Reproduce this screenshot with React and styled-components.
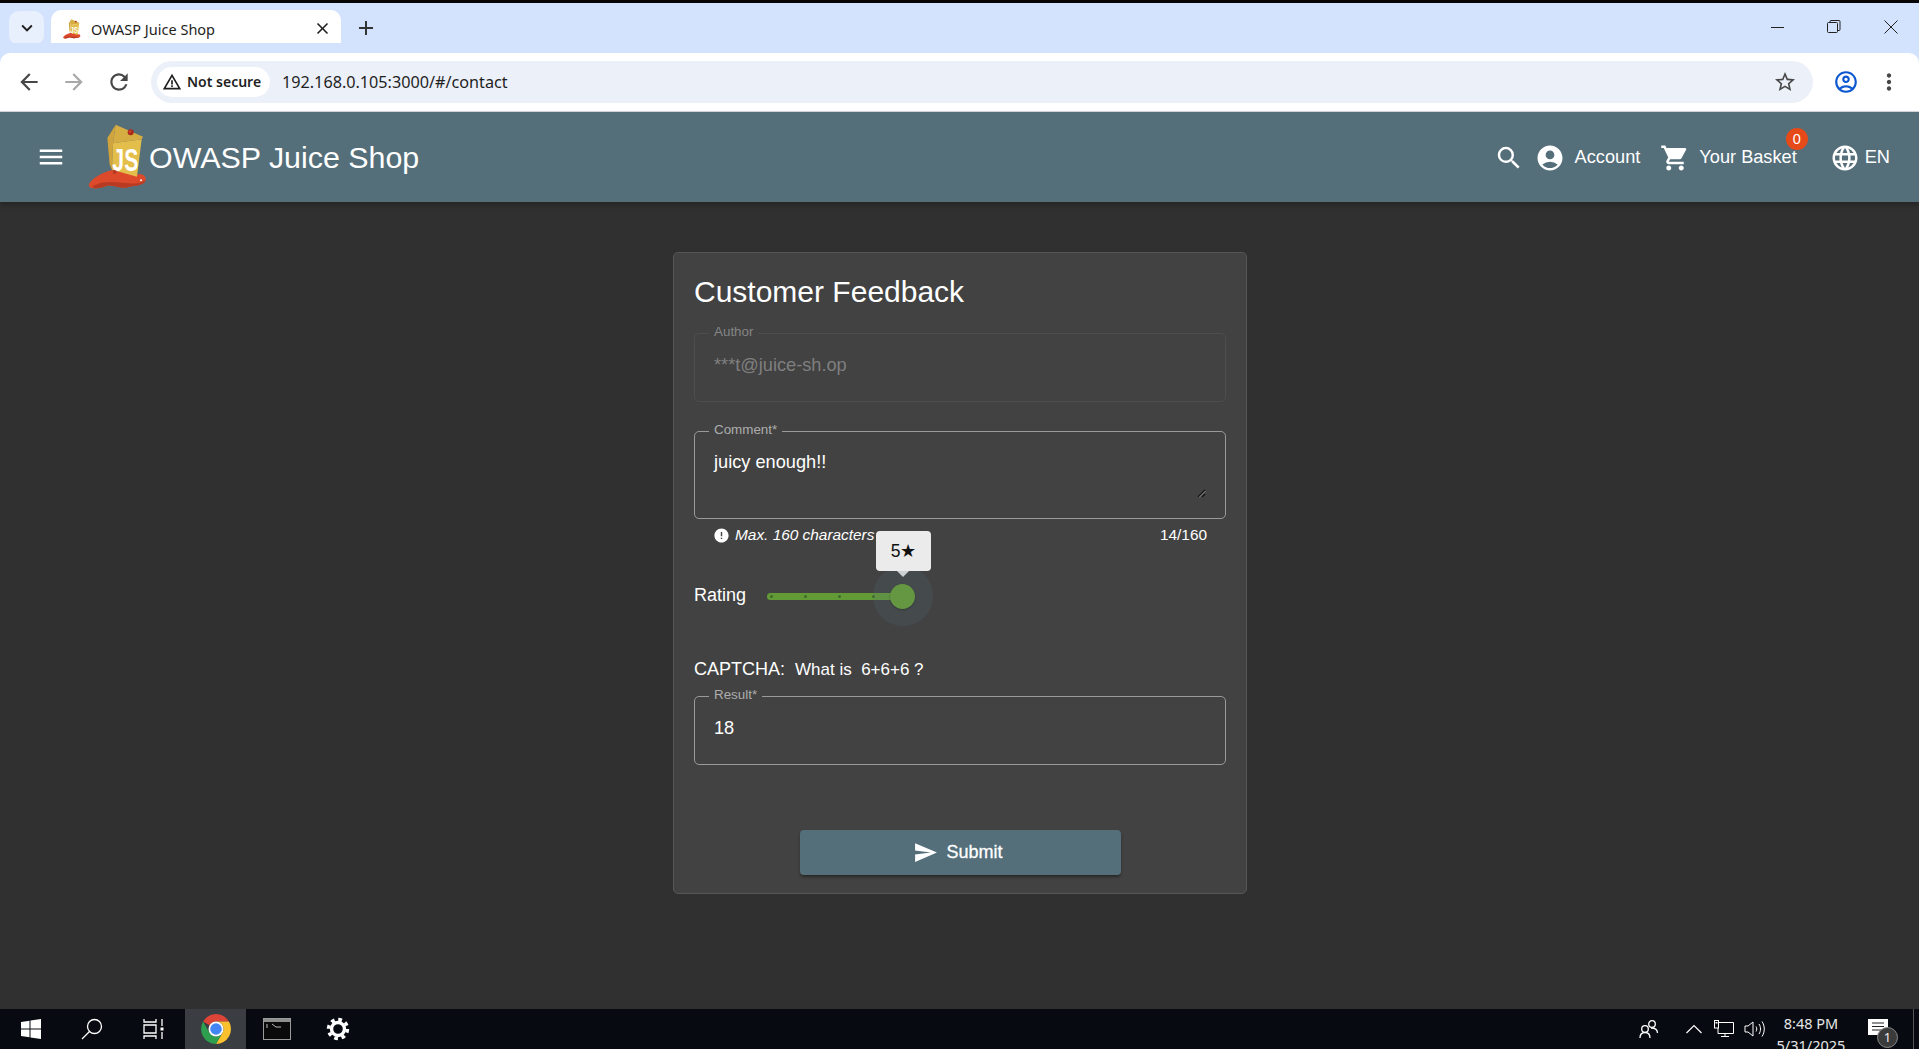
import styled, { createGlobalStyle } from "styled-components";
import {
  MdAccountCircle,
  MdAdd,
  MdArrowBack,
  MdArrowForward,
  MdClose,
  MdError,
  MdKeyboardArrowDown,
  MdLanguage,
  MdMenu,
  MdMoreVert,
  MdOutlineAccountCircle,
  MdRefresh,
  MdSearch,
  MdSend,
  MdShoppingCart,
  MdStarBorder,
  MdWarningAmber,
} from "react-icons/md";

const Global = createGlobalStyle`
  html, body {
    margin: 0;
    padding: 0;
    height: 100%;
    overflow: hidden;
    background: #303030;
  }
  * { box-sizing: border-box; }
`;

const Page = styled.div`
  height: 1049px;
  display: flex;
  flex-direction: column;
  overflow: hidden;
  font-family: "Liberation Sans", Arial, sans-serif;
  color: #fff;
`;

const TopStrip = styled.div`
  height: 3px;
  flex: none;
  background: #050505;
`;

const TabStrip = styled.div`
  height: 50px;
  flex: none;
  display: flex;
  align-items: flex-end;
  background: #d3e3fd;
  color: #1f1f1f;
  font-family: "Noto Sans", sans-serif;
`;

const TabSearch = styled.div`
  width: 35px;
  height: 34px;
  margin: 0 7px 8px 9px;
  border-radius: 10px;
  background: #e9f0fd;
  display: flex;
  align-items: center;
  justify-content: center;
  font-size: 22px;
`;

const Tab = styled.div`
  width: 290px;
  height: 43px;
  background: #fff;
  border-radius: 10px 10px 0 0;
  display: flex;
  align-items: center;
  padding: 0 9px 6px 12px;
  font-size: 14.5px;
`;

const TabTitle = styled.span`
  margin-left: 10px;
  flex: 1;
  white-space: nowrap;
`;

const NewTab = styled.div`
  margin: 0 0 10px 13px;
  height: 30px;
  display: flex;
  align-items: center;
  font-size: 24px;
  color: #333;
`;

const WindowControls = styled.div`
  margin-left: auto;
  align-self: stretch;
  display: flex;
`;

const WindowButton = styled.div`
  width: 57px;
  height: 48px;
  display: flex;
  align-items: center;
  justify-content: center;
`;

const Toolbar = styled.div`
  height: 59px;
  flex: none;
  display: flex;
  align-items: center;
  background: #fff;
  border-bottom: 1px solid #d5d8dc;
  border-radius: 10px 10px 0 0;
  box-shadow: 0 -10px 0 #d3e3fd;
  padding: 0 0 1px 14px;
  color: #474747;
  font-family: "Noto Sans", sans-serif;
  position: relative;
`;

const NavIcon = styled.div`
  width: 30px;
  margin-right: 15px;
  display: flex;
  justify-content: center;
  font-size: 26px;
  color: ${(p) => (p.$dim ? "#a8a8a8" : "#474747")};
`;

const Omnibox = styled.div`
  width: 1662px;
  height: 42px;
  margin-left: 2px;
  border-radius: 21px;
  background: #ebf0f9;
  display: flex;
  align-items: center;
  padding: 0 16px 0 6px;
`;

const SecurityChip = styled.div`
  width: 113px;
  height: 30px;
  border-radius: 15px;
  background: #fff;
  display: flex;
  align-items: center;
  padding-left: 5px;
  gap: 5px;
  font-size: 14px;
  font-weight: 600;
  color: #1f1f1f;
  white-space: nowrap;
`;

const Url = styled.span`
  margin-left: 12px;
  font-size: 16.2px;
  color: #1f1f1f;
  flex: 1;
  white-space: nowrap;
`;

const Profile = styled.div`
  margin-left: 18px;
  width: 30px;
  display: flex;
  justify-content: center;
  font-size: 26px;
  color: #0b57d0;
`;

const Kebab = styled.div`
  margin-left: 15px;
  display: flex;
  font-size: 26px;
  color: #474747;
`;

const Header = styled.header`
  height: 90px;
  flex: none;
  background: #546e7a;
  display: flex;
  align-items: center;
  padding: 0 29px 0 36px;
  box-shadow: 0 3px 5px rgba(0, 0, 0, 0.25);
  position: relative;
`;

const Brand = styled.div`
  margin-left: 22px;
  display: flex;
  align-items: center;
`;

const BrandName = styled.span`
  margin-left: 1px;
  font-size: 30.4px;
  white-space: nowrap;
`;

const HeaderNav = styled.nav`
  margin-left: auto;
  display: flex;
  align-items: center;
  font-size: 18.2px;
  padding-top: 1px;
`;

const NavItem = styled.span`
  position: relative;
  display: flex;
  align-items: center;
  margin-left: ${(p) => p.$gap || 0}px;
  white-space: nowrap;
`;

const Badge = styled.span`
  position: absolute;
  top: -19px;
  right: -11px;
  width: 22px;
  height: 22px;
  border-radius: 50%;
  background: #e64a19;
  font-size: 14.5px;
  line-height: 22px;
  text-align: center;
`;

const Main = styled.main`
  flex: 1;
  min-height: 0;
  background: #303030;
  display: flex;
  justify-content: center;
  align-items: flex-start;
  padding: 50px 0 0 1px;
`;

const Card = styled.section`
  width: 574px;
  height: 642px;
  background: #424242;
  border: 1px solid #565656;
  border-radius: 5px;
  padding: 0 20px;
`;

const Title = styled.h1`
  margin: 21px 0 23px;
  font-size: 30px;
  font-weight: 400;
  line-height: 36px;
  white-space: nowrap;
`;

const Field = styled.div`
  position: relative;
  height: ${(p) => p.$height}px;
  margin-top: ${(p) => p.$top || 0}px;
  border: 1px solid ${(p) => (p.$disabled ? "#4e4e4e" : "#9a9a9a")};
  border-radius: 5px;
  padding: ${(p) => p.$pad || 20}px 19px 0;
  font-size: 18.2px;
  line-height: 22px;
  color: ${(p) => (p.$disabled ? "#7f7f7f" : "#fff")};
`;

const FieldLabel = styled.span`
  position: absolute;
  top: -10px;
  left: 14px;
  padding: 0 5px;
  background: #424242;
  font-size: 13.4px;
  line-height: 16px;
  color: ${(p) => (p.$disabled ? "#858585" : "#adadad")};
`;

const ResizeGrip = styled.svg`
  position: absolute;
  right: 19px;
  bottom: 20px;
`;

const HintRow = styled.div`
  display: flex;
  align-items: center;
  padding: 7px 19px 0;
  font-size: 15.4px;
  line-height: 18px;
`;

const Hint = styled.span`
  margin-left: 5px;
  font-style: italic;
`;

const Counter = styled.span`
  margin-left: auto;
`;

const RatingRow = styled.div`
  display: flex;
  align-items: center;
  height: 28px;
  margin-top: 38px;
  font-size: 18px;
  padding-bottom: 2px;
`;

const Slider = styled.div`
  position: relative;
  width: 136px;
  height: 7px;
  margin-left: 21px;
  margin-top: 3px;
  border-radius: 4px 0 0 4px;
  background: #629b35;
  display: flex;
  padding-left: 3px;
  gap: 31px;
  align-items: center;
`;

const Tick = styled.i`
  width: 3px;
  height: 3px;
  border-radius: 50%;
  background: #3f6a2c;
`;

const Halo = styled.div`
  position: absolute;
  right: -30px;
  top: -27px;
  width: 60px;
  height: 60px;
  border-radius: 50%;
  background: rgba(84, 110, 122, 0.2);
`;

const Thumb = styled.div`
  position: absolute;
  right: -12px;
  top: -9px;
  width: 25px;
  height: 25px;
  border-radius: 50%;
  background: #659742;
  box-shadow: 0 1px 2px rgba(0, 0, 0, 0.25);
`;

const Tooltip = styled.div`
  position: absolute;
  right: -28px;
  top: -62px;
  width: 55px;
  height: 40px;
  border-radius: 4px;
  background: #ebebeb;
  color: #111;
  font-size: 17.5px;
  line-height: 40px;
  text-align: center;
  &::after {
    content: "";
    position: absolute;
    left: 21px;
    top: 40px;
    border: 6px solid transparent;
    border-bottom: 0;
    border-top-color: #cdd1d3;
  }
`;

const Captcha = styled.div`
  margin-top: 48px;
  display: flex;
  align-items: baseline;
  font-size: 18px;
  line-height: 22px;
`;

const CaptchaQuestion = styled.span`
  margin-left: 10px;
  font-size: 17px;
  white-space: pre;
`;

const SubmitRow = styled.div`
  display: flex;
  justify-content: center;
  margin-top: 65px;
`;

const SubmitButton = styled.button`
  width: 321px;
  height: 45px;
  border: 0;
  border-radius: 4px;
  background: #546e7a;
  color: #fff;
  font-family: inherit;
  font-size: 18px;
  font-weight: 400;
  display: flex;
  align-items: center;
  justify-content: center;
  gap: 8px;
  padding: 0 4px 0 0;
  -webkit-text-stroke: 0.3px #fff;
  box-shadow: 0 3px 3px -2px rgba(0, 0, 0, 0.3), 0 2px 3px rgba(0, 0, 0, 0.25);
`;

const Taskbar = styled.footer`
  height: 40px;
  flex: none;
  display: flex;
  background: #070b11;
  overflow: hidden;
  font-family: "Noto Sans", sans-serif;
`;

const TaskCell = styled.div`
  width: ${(p) => p.$width || 61}px;
  margin-right: ${(p) => p.$after || 0}px;
  height: 40px;
  flex: none;
  display: flex;
  align-items: center;
  justify-content: center;
  background: ${(p) => (p.$active ? "#3a3d42" : "transparent")};
`;

const TraySpacer = styled.div`
  margin-left: auto;
`;

const Clock = styled.div`
  width: 84px;
  flex: none;
  padding-top: 3px;
  text-align: center;
  font-size: 14.5px;
  line-height: 22px;
  color: #e6e6e6;
  white-space: nowrap;
`;

const NotifyWrap = styled.div`
  position: relative;
  display: flex;
`;

const NotifyCount = styled.span`
  position: absolute;
  left: 9px;
  top: 8px;
  width: 21px;
  height: 21px;
  border-radius: 50%;
  background: #3b3b3b;
  border: 1px solid #8a8a8a;
  font-size: 13px;
  line-height: 19px;
  text-align: center;
  color: #eee;
`;

const ShowDesktop = styled.div`
  width: 16px;
  flex: none;
  padding-left: 10px;
  &::before {
    content: "";
    display: block;
    width: 1px;
    height: 40px;
    background: #555;
  }
`;

function JuiceLogo({ width, height }) {
  return (
    <svg width={width} height={height} viewBox="25 28 180 198">
      <path
        d="M27 212 C30 196 60 176 96 166 L170 180 C185 176 200 180 198 196 C196 212 170 212 150 216 C120 226 100 208 80 214 C60 222 30 226 27 212Z"
        fill="#dc4a2b"
      />
      <path
        d="M40 214 C70 196 110 202 150 206 C170 208 190 204 198 196 C196 212 170 212 150 216 C120 226 100 208 80 214 C60 222 36 224 40 214Z"
        fill="#b93a22"
      />
      <circle cx="184" cy="197" r="3" fill="#fff" />
      <path d="M83 70 L108 30 L100 86 L97 165 L90 150Z" fill="#cfa43c" />
      <path d="M108 30 L190 66 L186 74 L100 86Z" fill="#d6ad42" />
      <path d="M100 86 L186 74 L172 186 L97 165Z" fill="#e4be4b" />
      <circle cx="153" cy="53" r="9" fill="#a92a1b" />
      <circle cx="151" cy="51" r="4" fill="#cf3f29" />
      <text
        x="98"
        y="170"
        fontFamily="Liberation Sans, sans-serif"
        fontWeight="700"
        fontSize="92"
        fill="#fff"
        textLength="78"
        lengthAdjust="spacingAndGlyphs"
      >
        JS
      </text>
      <circle cx="105" cy="172" r="6" fill="#b93a22" />
    </svg>
  );
}

function ChromeLogo() {
  return (
    <svg width="30" height="30" viewBox="2 2 44 44">
      <path d="M5 13 A22 22 0 0 1 43.05 13 H24 A11 11 0 0 0 14.5 18.5Z" fill="#db4437" />
      <path d="M43.05 13 A22 22 0 0 1 24 46 L33.5 29.5 A11 11 0 0 0 33.5 18.5 A11 11 0 0 0 24 13Z" fill="#fbc02d" />
      <path d="M24 46 A22 22 0 0 1 5 13 L14.5 29.5 A11 11 0 0 0 33.5 29.5Z" fill="#2e9e4f" />
      <circle cx="24" cy="24" r="11" fill="#fff" />
      <circle cx="24" cy="24" r="8.5" fill="#4285f4" />
    </svg>
  );
}

export default function App() {
  return (
    <Page>
      <Global />
      <TopStrip />
      <TabStrip>
        <TabSearch>
          <MdKeyboardArrowDown />
        </TabSearch>
        <Tab>
          <JuiceLogo width={18} height={20} />
          <TabTitle>OWASP Juice Shop</TabTitle>
          <MdClose size={19} />
        </Tab>
        <NewTab>
          <MdAdd />
        </NewTab>
        <WindowControls>
          <WindowButton>
            <svg width="14" height="14" viewBox="0 0 14 14">
              <path d="M1 7.5H14" stroke="#222" />
            </svg>
          </WindowButton>
          <WindowButton>
            <svg width="14" height="14" viewBox="0 0 14 14" fill="none" stroke="#222">
              <rect x="0.5" y="2.5" width="10" height="10" rx="1" />
              <path d="M3 2.5V1.5a1 1 0 0 1 1-1h8a1 1 0 0 1 1 1v8a1 1 0 0 1-1 1h-1" />
            </svg>
          </WindowButton>
          <WindowButton>
            <svg width="14" height="14" viewBox="0 0 14 14">
              <path d="M0.5 0.5L13.5 13.5M13.5 0.5L0.5 13.5" stroke="#222" />
            </svg>
          </WindowButton>
        </WindowControls>
      </TabStrip>
      <Toolbar>
        <NavIcon>
          <MdArrowBack />
        </NavIcon>
        <NavIcon $dim>
          <MdArrowForward />
        </NavIcon>
        <NavIcon>
          <MdRefresh />
        </NavIcon>
        <Omnibox>
          <SecurityChip>
            <MdWarningAmber size={20} />
            Not secure
          </SecurityChip>
          <Url>192.168.0.105:3000/#/contact</Url>
          <MdStarBorder size={24} color="#474747" />
        </Omnibox>
        <Profile>
          <MdOutlineAccountCircle />
        </Profile>
        <Kebab>
          <MdMoreVert />
        </Kebab>
      </Toolbar>
      <Header>
        <MdMenu size={30} />
        <Brand>
          <JuiceLogo width={60} height={66} />
          <BrandName>OWASP Juice Shop</BrandName>
        </Brand>
        <HeaderNav>
          <MdSearch size={30} />
          <NavItem $gap={11}>
            <MdAccountCircle size={30} />
          </NavItem>
          <NavItem $gap={10}>Account</NavItem>
          <NavItem $gap={20}>
            <MdShoppingCart size={30} />
          </NavItem>
          <NavItem $gap={9}>
            Your Basket
            <Badge>0</Badge>
          </NavItem>
          <NavItem $gap={33}>
            <MdLanguage size={30} />
          </NavItem>
          <NavItem $gap={5}>EN</NavItem>
        </HeaderNav>
      </Header>
      <Main>
        <Card>
          <Title>Customer Feedback</Title>
          <Field $height={69} $disabled>
            <FieldLabel $disabled>Author</FieldLabel>
            ***t@juice-sh.op
          </Field>
          <Field $height={88} $top={29} $pad={19}>
            <FieldLabel>Comment*</FieldLabel>
            juicy enough!!
            <ResizeGrip width="9" height="9" viewBox="0 0 9 9">
              <path d="M1 8L8 1M5 8L8 5" stroke="#111" strokeWidth="1.2" />
              <path d="M2 8.5L8.5 2" stroke="#ccc" strokeWidth="0.6" />
            </ResizeGrip>
          </Field>
          <HintRow>
            <MdError size={17} />
            <Hint>Max. 160 characters</Hint>
            <Counter>14/160</Counter>
          </HintRow>
          <RatingRow>
            Rating
            <Slider>
              <Tick />
              <Tick />
              <Tick />
              <Tick />
              <Halo />
              <Thumb />
              <Tooltip>5★</Tooltip>
            </Slider>
          </RatingRow>
          <Captcha>
            CAPTCHA:
            <CaptchaQuestion>What is  6+6+6 ?</CaptchaQuestion>
          </Captcha>
          <Field $height={69} $top={15}>
            <FieldLabel>Result*</FieldLabel>
            18
          </Field>
          <SubmitRow>
            <SubmitButton>
              <MdSend size={25} />
              Submit
            </SubmitButton>
          </SubmitRow>
        </Card>
      </Main>
      <Taskbar>
        <TaskCell>
          <svg width="20" height="20" viewBox="0 0 20 20" fill="#fff">
            <path d="M0 3L8.5 1.8V9.5H0ZM9.5 1.6L20 0V9.5H9.5ZM0 10.5H8.5V18.2L0 17ZM9.5 10.5H20V20L9.5 18.4Z" />
          </svg>
        </TaskCell>
        <TaskCell>
          <svg width="22" height="22" viewBox="0 0 22 22" fill="none" stroke="#fff" strokeWidth="1.3">
            <circle cx="13.5" cy="8.5" r="7" />
            <path d="M8.5 13.5L1 21" />
          </svg>
        </TaskCell>
        <TaskCell $width={63}>
          <svg width="22" height="20" viewBox="0 0 22 20" fill="none" stroke="#fff" strokeWidth="1.3">
            <path d="M1 0V3H13V0M1 20V17H13V20M1 6H13V14H1ZM19 0V7M19 13V20" />
            <rect x="17.5" y="8.5" width="3" height="3" fill="#fff" stroke="none" />
          </svg>
        </TaskCell>
        <TaskCell $active>
          <ChromeLogo />
        </TaskCell>
        <TaskCell>
          <svg width="28" height="22" viewBox="0 0 28 22">
            <rect x="0.5" y="0.5" width="27" height="21" fill="#0a0a0a" stroke="#9a9a9a" />
            <rect x="1" y="1" width="26" height="3" fill="#8f8f8f" />
            <path d="M3 7H5M3 9H5M9 6L13 9H18" stroke="#bbb" />
          </svg>
        </TaskCell>
        <TaskCell $width={62}>
          <svg width="24" height="24" viewBox="0 0 24 24" fill="none" stroke="#fff">
            <circle cx="12" cy="12" r="6.5" strokeWidth="3.4" />
            <circle cx="12" cy="12" r="9.5" strokeWidth="3.4" strokeDasharray="3.7 3.76" />
          </svg>
        </TaskCell>
        <TraySpacer />
        <TaskCell $width={46} $after={7}>
          <svg width="20" height="20" viewBox="0 0 20 20" fill="none" stroke="#fff" strokeWidth="1.3">
            <circle cx="13" cy="5" r="3.3" />
            <circle cx="6" cy="10" r="3.3" />
            <path d="M1 19C1 15 3 13.5 6 13.5S11 15 11 19M12 9C15 9 18.5 10 18.5 14" />
          </svg>
        </TaskCell>
        <TaskCell $width={30}>
          <svg width="16" height="10" viewBox="0 0 16 10" fill="none" stroke="#fff" strokeWidth="1.2">
            <path d="M0.5 9L8 1.5L15.5 9" />
          </svg>
        </TaskCell>
        <TaskCell $width={30}>
          <svg width="20" height="18" viewBox="0 0 20 18" fill="none" stroke="#fff">
            <path d="M4 2.5H19.5V13.5H4V8M11 13.5V16.5M7 16.5H15" />
            <rect x="0.5" y="0.5" width="4" height="7.5" fill="#070b11" />
            <rect x="1.5" y="2" width="2" height="1.5" fill="#fff" stroke="none" />
          </svg>
        </TaskCell>
        <TaskCell $width={30}>
          <svg width="21" height="18" viewBox="0 0 21 18" fill="none" stroke="#fff">
            <path d="M1 6H4L9 2V16L4 12H1ZM12 6.5C13 8 13 10 12 11.5M15 4C17 7 17 11 15 14M18 1.5C21 6 21 12 18 16.5" />
          </svg>
        </TaskCell>
        <Clock>
          8:48 PM
          <br />
          5/31/2025
        </Clock>
        <TaskCell $width={50}>
          <NotifyWrap>
            <svg width="20" height="20" viewBox="0 0 20 20">
              <path d="M0 0H20V16H0Z" fill="#fff" />
              <path d="M4 4H16M4 7.5H16M4 11H16" stroke="#222" />
            </svg>
            <NotifyCount>1</NotifyCount>
          </NotifyWrap>
        </TaskCell>
        <ShowDesktop />
      </Taskbar>
    </Page>
  );
}
